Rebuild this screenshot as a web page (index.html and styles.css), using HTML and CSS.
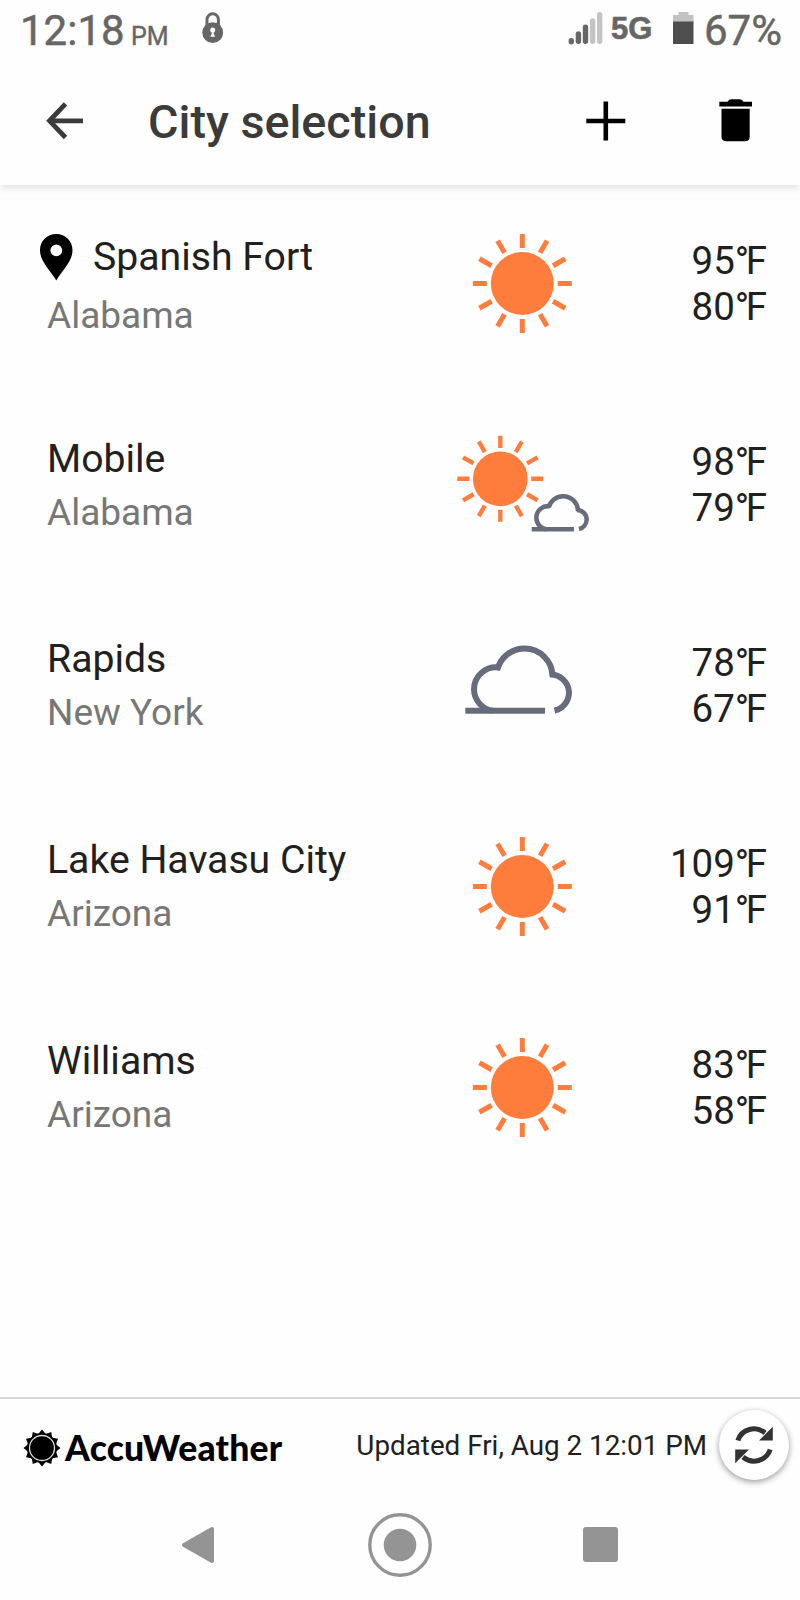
FILE: index.html
```
<!DOCTYPE html>
<html lang="en">
<head>
  <meta charset="UTF-8" />
  <meta name="viewport" content="width=device-width, initial-scale=1.0" />
  <title>City selection</title>
  <link rel="stylesheet" href="styles.css">
</head>
<body>
  <svg class="defs" width="0" height="0">
    <symbol id="sun" viewBox="-50 -50 100 100">
      <circle r="31.5" fill="#ff7d3c" />
      <g stroke="#ff7d3c" stroke-width="5">
        <path id="rays" d="M0 -35.5V-49.5M0 35.5V49.5M-35.5 0H-49.5M35.5 0H49.5" />
        <use href="#rays" transform="rotate(30)" />
        <use href="#rays" transform="rotate(60)" />
      </g>
    </symbol>
    <g id="cloud" fill="none" stroke="#666c7c">
      <path d="M25.3 91.3H105" />
      <path d="M53 91.3A22 22 0 0 1 34 70A22 22 0 0 1 60 48.2" />
      <path d="M57.3 50.5A28 28 0 0 1 84 29A28 28 0 0 1 112.5 57.2" />
      <path d="M110 55A18.5 18.5 0 0 1 129 73A18.5 18.5 0 0 1 114.5 91" />
    </g>
  </svg>

  <div class="status">
    <span class="time">12:18</span>
    <span class="ampm">PM</span>
    <svg class="lock" width="22" height="32" viewBox="0 0 22 32">
      <path d="M5 16V7.500a5.700 5.700 0 0 1 11.400 0V16" fill="none" stroke="#666" stroke-width="3" />
      <circle cx="10.700" cy="20.700" r="10.400" fill="#666" />
      <circle cx="10.700" cy="18" r="2.500" fill="#fff" />
      <path d="M9.700 18h2v4l1.500 2.700h-5l1.500-2.700z" fill="#fff" />
    </svg>
    <span class="space"></span>
    <svg class="signal" width="36" height="33" viewBox="0 0 36 33">
      <g stroke="#666" stroke-width="5.400" stroke-linecap="round">
        <path d="M3.300 28.700v1M10.400 22v7.300M17.500 15.200v14.100" />
        <path d="M24.600 9v20.300M31.700 2.700v26.600" stroke="#c4c4c4" />
      </g>
    </svg>
    <span class="network">5G</span>
    <svg class="battery" width="21" height="32" viewBox="0 0 21 32">
      <path d="M0 3h5.500V0h10v3H20.500v8H0z" fill="#c2c2c2" />
      <path d="M0 9.500h20.500V32H0z" fill="#4e4e4e" />
    </svg>
    <span class="percent">67%</span>
  </div>

  <header class="header">
    <svg class="back" width="38" height="38" viewBox="0 0 38 38">
      <path d="M19.500 1.800L3.500 18.800L19.500 35.500M3.500 18.800H37" fill="none" stroke="#3b3b3b" stroke-width="4.800" />
    </svg>
    <h1>City selection</h1>
    <svg class="add" width="40" height="40" viewBox="0 0 40 40">
      <path d="M19.800 .500V39.500M.300 20H39.300" stroke="#000" stroke-width="4.600" />
    </svg>
    <svg class="trash" width="34" height="43" viewBox="0 0 34 43">
      <path d="M.300 2.700H8.500Q10 .300 12.500 .300H20.500Q23 .300 24.500 2.700H33V7.500H.300zM2.500 9.700H30.700V37.500Q30.700 42.300 26 42.300H7.300Q2.500 42.300 2.500 37.500z" />
    </svg>
  </header>

  <main class="cities">
    <div class="city current">
      <div class="place">
        <div class="name">
          <svg class="pin" width="33" height="47" viewBox="0 0 33 47">
            <path fill-rule="evenodd" d="M16.300 0C7 0 0 7 0 16.200C0 27.500 10 36 16.300 46.500C22.500 36 32.500 27.500 32.500 16.200C32.500 7 25.500 0 16.300 0zM16.300 10.400a5.900 5.900 0 1 1 0 11.800a5.900 5.900 0 1 1 0-11.800z" />
          </svg>
          Spanish Fort
        </div>
        <div class="state">Alabama</div>
      </div>
      <svg class="icon" width="160" height="120"><use href="#sun" x="30.300" y="9.500" width="100" height="100" /></svg>
      <div class="temps">95<i>°</i>F<br>80<i>°</i>F</div>
    </div>
    <div class="city">
      <div class="place">
        <div class="name">Mobile</div>
        <div class="state">Alabama</div>
      </div>
      <svg class="icon" width="160" height="120">
        <use href="#sun" x="14.800" y="10.300" width="87" height="87" />
        <use href="#cloud" transform="translate(76.300 55.800) scale(.53)" stroke-width="8.500" />
      </svg>
      <div class="temps">98<i>°</i>F<br>79<i>°</i>F</div>
    </div>
    <div class="city">
      <div class="place">
        <div class="name">Rapids</div>
        <div class="state">New York</div>
      </div>
      <svg class="icon" width="160" height="120"><use href="#cloud" transform="translate(-2 -6.500)" stroke-width="6" /></svg>
      <div class="temps">78<i>°</i>F<br>67<i>°</i>F</div>
    </div>
    <div class="city">
      <div class="place">
        <div class="name">Lake Havasu City</div>
        <div class="state">Arizona</div>
      </div>
      <svg class="icon" width="160" height="120"><use href="#sun" x="30.300" y="9.500" width="100" height="100" /></svg>
      <div class="temps">109<i>°</i>F<br>91<i>°</i>F</div>
    </div>
    <div class="city">
      <div class="place">
        <div class="name">Williams</div>
        <div class="state">Arizona</div>
      </div>
      <svg class="icon" width="160" height="120"><use href="#sun" x="30.300" y="9.500" width="100" height="100" /></svg>
      <div class="temps">83<i>°</i>F<br>58<i>°</i>F</div>
    </div>
  </main>

  <footer class="footer">
    <svg class="logo" width="38" height="38" viewBox="-19 -19 38 38">
      <g id="teeth">
        <path id="tooth" d="M-4.500 -13L0 -18.500L4.500 -13zM-4.500 13L0 18.500L4.500 13z" />
        <use href="#tooth" transform="rotate(30)" />
        <use href="#tooth" transform="rotate(60)" />
        <use href="#tooth" transform="rotate(90)" />
        <use href="#tooth" transform="rotate(120)" />
        <use href="#tooth" transform="rotate(150)" />
      </g>
      <circle r="15" />
      <circle r="12.500" fill="none" stroke="#ddd" stroke-width="1.300" />
    </svg>
    <span class="brand">AccuWeather</span>
    <span class="updated">Updated Fri, Aug 2 12:01 PM</span>
    <button class="refresh">
      <svg width="40" height="40" viewBox="0 0 40 40">
        <g id="half">
          <path d="M3.800 15.500A17 17 0 0 1 31 8" fill="none" stroke="#333" stroke-width="5" />
          <path d="M38.800 1.700V15.500H25z" fill="#333" />
        </g>
        <use href="#half" transform="rotate(180 20 20)" />
      </svg>
    </button>
  </footer>

  <nav class="navbar">
    <svg width="34" height="38" viewBox="0 0 34 38">
      <path d="M3 19L31 3V35z" fill="#949494" stroke="#949494" stroke-width="4" stroke-linejoin="round" />
    </svg>
    <svg class="home" width="64" height="64" viewBox="0 0 64 64">
      <circle cx="32" cy="32" r="30.200" fill="none" stroke="#949494" stroke-width="3.400" />
      <circle cx="32" cy="32" r="16.300" fill="#949494" />
    </svg>
    <span class="recent"></span>
  </nav>
</body>
</html>
```
FILE: styles.css
```
* {
  margin: 0; padding: 0; box-sizing: border-box;
}
body {
  width: 800px;
  height: 1600px;
  overflow: hidden;
  display: flex;
  flex-direction: column;
  background: #fefefe;
  color: #202020;
  font-family: Roboto, sans-serif;
}
svg {
  display: block;
  flex: none;
}
.defs {
  position: absolute;
}
.status {
  height: 60px;
  display: flex;
  align-items: flex-start;
  padding-left: 20px;
  color: #666;
  white-space: nowrap;
}
.time, .percent {
  font-size: 42px;
  line-height: 62px;
  -webkit-text-stroke: 0.5px #666;
}
.time {
  width: 111px;
}
.ampm {
  width: 71px;
  font-size: 25px;
  line-height: 74px;
  -webkit-text-stroke: 0.4px #666;
}
.lock {
  margin-top: 12px;
}
.space {
  flex: 1;
}
.signal {
  margin-top: 12px;
}
.network {
  width: 69px;
  padding-left: 7px;
  font: bold 31px/57px "Liberation Sans", sans-serif;
  -webkit-text-stroke: 0.6px #666;
}
.battery {
  margin-top: 12px;
}
.percent {
  width: 106px;
  padding-left: 10px;
}
.header {
  height: 125px;
  display: flex;
  align-items: center;
  padding: 0 47px 4px 46px;
  box-shadow: 0 2px 8px rgba(0,0,0,0.14);
  clip-path: inset(0 0 -14px 0);
}
h1 {
  flex: 1;
  margin-left: 64px;
  padding-top: 3px;
  font-size: 46.7px;
  font-weight: 500;
  line-height: 60px;
  color: #3b3b3b;
}
.add {
  margin-right: 93px;
}
.cities {
  margin-top: -1px;
}
.city {
  height: 200.8px;
  display: grid;
  grid-template-columns: 395px 160px 1fr;
  align-items: center;
  padding: 0 33px 0 47px;
}
.name {
  display: flex;
  align-items: center;
  font-size: 39.2px;
  line-height: 54px;
}
.current .name {
  gap: 20px;
  margin-left: -7px;
  line-height: 61px;
  padding-top: 1px;
}
.current .state {
  line-height: 56px;
  margin-bottom: -1px;
}
.state {
  font-size: 37px;
  line-height: 53px;
  color: #777;
}
.temps {
  text-align: right;
  font-size: 38.5px;
  line-height: 46px;
}
.temps i {
  font-style: normal;
  letter-spacing: -3.5px;
}
.footer {
  height: 92px;
  margin-top: auto;
  display: flex;
  align-items: center;
  border-top: 2px solid #d6d6d6;
  padding: 2px 11px 0 23px;
}
.brand {
  flex: 1;
  margin-left: 4px;
  padding-top: 4px;
  font-family: Lato, sans-serif;
  font-weight: 900;
  font-size: 35.5px;
  letter-spacing: 0.2px;
  color: #000;
}
.logo {
  margin-top: 5px;
}
.updated {
  margin-right: 12px;
  font-size: 27.8px;
}
.refresh {
  width: 70px;
  height: 70px;
  display: flex;
  align-items: center;
  justify-content: center;
  border: none;
  border-radius: 50%;
  background: #fff;
  box-shadow: 0 2px 6px rgba(0,0,0,0.4);
}
.navbar {
  height: 111px;
  display: flex;
  align-items: center;
  justify-content: space-between;
  padding: 0 182px 0 181px;
}
.home {
  margin-left: 1px;
}
.recent {
  width: 35px;
  height: 35px;
  border-radius: 3px;
  background: #949494;
}
```
